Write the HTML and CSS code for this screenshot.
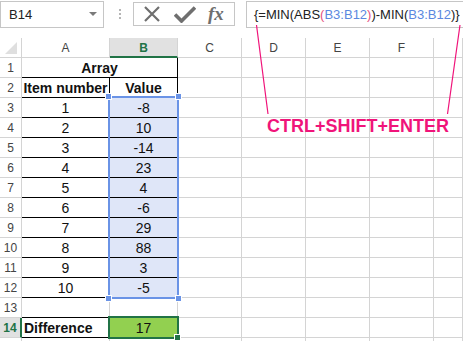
FILE: index.html
```html
<!DOCTYPE html>
<html lang="en">
<head>
    <meta charset="UTF-8">
    <title>Array formula</title>
    <link rel="stylesheet" href="styles.css">
</head>
<body>

<div class="app">
    <div class="fbar">
        <div class="namebox">
            <span>B14</span>
            <svg class="caret" width="8" height="5" viewBox="0 0 8 5"><path d="M0 0H8L4 4Z" fill="#7a7a7a"/></svg>
        </div>
        <div class="grip"><i></i><i></i><i></i></div>
        <div class="tools">
            <svg width="18" height="18" viewBox="0 0 18 18"><path d="M2 2L16 16M16 2L2 16" stroke="#6f6f6f" stroke-width="2.2" fill="none"/></svg>
            <svg width="22" height="18" viewBox="0 0 22 18"><path d="M1 9.5L7.5 16L21 2.5" stroke="#6f6f6f" stroke-width="3.6" fill="none"/></svg>
            <span class="fx">fx</span>
        </div>
        <div class="formula">{=MIN(ABS<span class="par">(</span><span class="ref">B3:B12</span><span class="par">)</span>)-MIN(<span class="ref">B3:B12</span>)}</div>
    </div>

    <div class="sheet">
        <!-- column headers -->
        <div class="hd corner"><span class="tri"></span></div>
        <div class="hd">A</div>
        <div class="hd sel">B</div>
        <div class="hd">C</div>
        <div class="hd">D</div>
        <div class="hd">E</div>
        <div class="hd">F</div>
        <div class="hd"></div>

        <div class="rh">1</div>
        <div class="c span2 b bb br">Array</div>
        <div class="c"></div><div class="c"></div><div class="c"></div><div class="c"></div><div class="c"></div>

        <div class="rh">2</div>
        <div class="c b bb br">Item number</div>
        <div class="c b bb br">Value</div>
        <div class="c"></div><div class="c"></div><div class="c"></div><div class="c"></div><div class="c"></div>

        <div class="rh">3</div>
        <div class="c bb br">1</div>
        <div class="c v bb">-8</div>
        <div class="c"></div><div class="c"></div><div class="c"></div><div class="c"></div><div class="c"></div>

        <div class="rh">4</div>
        <div class="c bb br">2</div>
        <div class="c v bb">10</div>
        <div class="c"></div><div class="c"></div><div class="c"></div><div class="c"></div><div class="c"></div>

        <div class="rh">5</div>
        <div class="c bb br">3</div>
        <div class="c v bb">-14</div>
        <div class="c"></div><div class="c"></div><div class="c"></div><div class="c"></div><div class="c"></div>

        <div class="rh">6</div>
        <div class="c bb br">4</div>
        <div class="c v bb">23</div>
        <div class="c"></div><div class="c"></div><div class="c"></div><div class="c"></div><div class="c"></div>

        <div class="rh">7</div>
        <div class="c bb br">5</div>
        <div class="c v bb">4</div>
        <div class="c"></div><div class="c"></div><div class="c"></div><div class="c"></div><div class="c"></div>

        <div class="rh">8</div>
        <div class="c bb br">6</div>
        <div class="c v bb">-6</div>
        <div class="c"></div><div class="c"></div><div class="c"></div><div class="c"></div><div class="c"></div>

        <div class="rh">9</div>
        <div class="c bb br">7</div>
        <div class="c v bb">29</div>
        <div class="c"></div><div class="c"></div><div class="c"></div><div class="c"></div><div class="c"></div>

        <div class="rh">10</div>
        <div class="c bb br">8</div>
        <div class="c v bb">88</div>
        <div class="c"></div><div class="c"></div><div class="c"></div><div class="c"></div><div class="c"></div>

        <div class="rh">11</div>
        <div class="c bb br">9</div>
        <div class="c v bb">3</div>
        <div class="c"></div><div class="c"></div><div class="c"></div><div class="c"></div><div class="c"></div>

        <div class="rh">12</div>
        <div class="c bb br">10</div>
        <div class="c v bb">-5</div>
        <div class="c"></div><div class="c"></div><div class="c"></div><div class="c"></div><div class="c"></div>

        <div class="rh">13</div>
        <div class="c bb"></div>
        <div class="c"></div>
        <div class="c"></div><div class="c"></div><div class="c"></div><div class="c"></div><div class="c"></div>

        <div class="rh sel">14</div>
        <div class="c b left bb">Difference</div>
        <div class="c green">17</div>
        <div class="c"></div><div class="c"></div><div class="c"></div><div class="c"></div><div class="c"></div>

        <div class="rh"></div>
        <div class="c"></div><div class="c"></div>
        <div class="c"></div><div class="c"></div><div class="c"></div><div class="c"></div><div class="c"></div>

        <!-- selection frames, placed on their grid areas -->
        <div class="range">
            <span class="h tl"></span><span class="h tr"></span>
            <span class="h bl"></span><span class="h br2"></span>
        </div>
        <div class="active"><span class="fill"></span></div>
    </div>

    <svg class="callout" width="463" height="120" viewBox="0 0 463 120">
        <path d="M256.5 25L268 114M460 25L447.5 114" stroke="#f0147a" stroke-width="1.2" fill="none"/>
    </svg>
    <div class="hint">CTRL+SHIFT+ENTER</div>
</div>

</body>
</html>
```

FILE: styles.css
```css
body {
    margin: 0;
    background-color: #fff;
    font-family: "Liberation Sans", Arial, sans-serif;
}

.app {
    position: relative;
    width: 463px;
    height: 341px;
    overflow: hidden;
}

/* formula bar */
.fbar {
    display: flex;
    align-items: center;
    height: 28px;
    margin-bottom: 10px;
}

.namebox {
    display: flex;
    align-items: center;
    justify-content: space-between;
    box-sizing: border-box;
    width: 104px;
    height: 27px;
    padding: 0 6px 0 8px;
    border: 1px solid #c6c6c6;
    font-size: 13px;
    color: #222;
}

.grip {
    display: flex;
    flex-direction: column;
    gap: 2px;
    margin: 0 12px 0 15px;
}

.grip i {
    display: block;
    width: 2px;
    height: 2px;
    background-color: #b5b5b5;
}

.tools {
    display: flex;
    align-items: center;
    box-sizing: border-box;
    width: 102px;
    height: 24px;
    padding: 0 0 0 9px;
    border: 1px solid #c6c6c6;
    gap: 13px;
}

.fx {
    font-family: "Liberation Serif", serif;
    font-style: italic;
    font-weight: bold;
    font-size: 19px;
    color: #6f6f6f;
    margin-left: -1px;
}

.formula {
    box-sizing: border-box;
    height: 27px;
    margin-left: 11px;
    flex: 1;
    padding: 0 0 0 7px;
    border: 1px solid #c6c6c6;
    border-right: none;
    font-size: 13px;
    line-height: 25px;
    color: #222;
    white-space: nowrap;
}

.formula .ref {
    color: #5b88e0;
}

.formula .par {
    color: #e5507f;
}

/* sheet */
.sheet {
    position: relative;
    display: grid;
    grid-template-columns: 22px 88px 68px 64px 64px 64px 64px 1fr;
    grid-auto-rows: 20px;
}

.hd,
.rh,
.c {
    box-sizing: border-box;
    border-right: 1px solid #d4d4d4;
    border-bottom: 1px solid #d4d4d4;
    display: flex;
    align-items: center;
    justify-content: center;
}

.hd {
    font-size: 12px;
    color: #444;
    padding-top: 1px;
}

.hd.sel {
    background-color: #e1e1e1;
    color: #217346;
    font-weight: bold;
    border-bottom: 2px solid #217346;
}

.corner {
    position: relative;
}

.tri {
    position: absolute;
    right: 4px;
    bottom: 3px;
    width: 0;
    height: 0;
    border-left: 12px solid transparent;
    border-bottom: 12px solid #dfdfdf;
}

.rh {
    font-size: 12px;
    color: #444;
    padding-top: 1px;
}

.rh.sel {
    background-color: #e1e1e1;
    color: #217346;
    font-weight: bold;
    border-right: 2px solid #217346;
}

.c {
    font-size: 14px;
    color: #111;
    padding-top: 1px;
}

.span2 {
    grid-column: span 2;
}

.b {
    font-weight: bold;
}

.left {
    justify-content: flex-start;
    padding-left: 2px;
}

.bb {
    border-bottom-color: #000;
}

.br {
    border-right-color: #000;
}

.v {
    background-color: #dfe6f8;
}

.green {
    background-color: #92d050;
}

.range {
    position: absolute;
    grid-column: 3 / 4;
    grid-row: 4 / 14;
    inset: -2px -1px -1px -2px;
    border: 2px solid #6a93e6;
}

.h {
    position: absolute;
    width: 5px;
    height: 5px;
    background-color: #6a93e6;
    border: 1px solid #fff;
}

.tl { left: -5px; top: -5px; }
.tr { right: -5px; top: -5px; }
.bl { left: -5px; bottom: -5px; }
.br2 { right: -5px; bottom: -5px; }

.active {
    position: absolute;
    grid-column: 3 / 4;
    grid-row: 15 / 16;
    inset: -2px -1px -1px -2px;
    border: 2px solid #217346;
}

.fill {
    position: absolute;
    right: -4px;
    bottom: -4px;
    width: 5px;
    height: 5px;
    background-color: #217346;
    border: 1px solid #fff;
}

/* annotation */
.callout {
    position: absolute;
    left: 0;
    top: 0;
}

.hint {
    position: absolute;
    left: 267px;
    top: 116px;
    font-size: 18px;
    font-weight: bold;
    color: #f0147a;
    white-space: nowrap;
}
```
